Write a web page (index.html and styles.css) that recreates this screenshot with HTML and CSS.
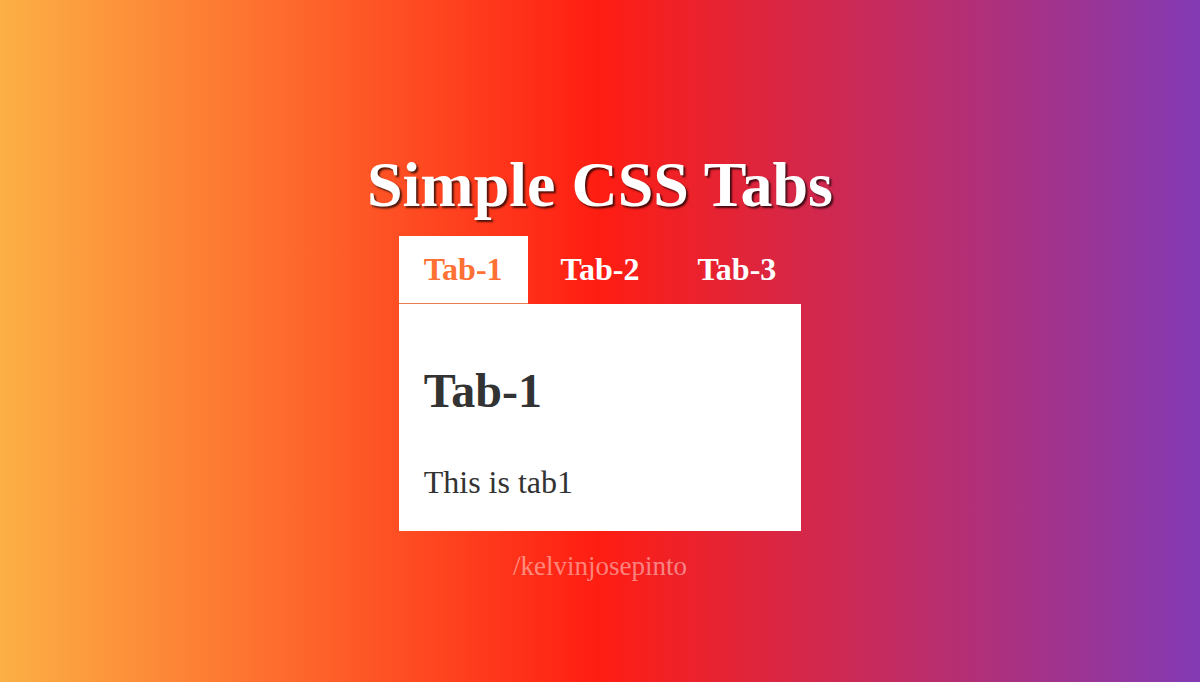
FILE: index.html
```html
<!DOCTYPE html>
<html lang="en">
<head>
  <meta charset="UTF-8">
  <meta name="viewport" content="width=device-width, initial-scale=1.0">
  <title>Simple CSS Tabs</title>
  <link rel="stylesheet" href="styles.css">
</head>
<body>

<h1>Simple CSS Tabs</h1>

<div class="tabs">
  <input type="radio" name="tabs" id="tab1" checked>
  <label for="tab1">Tab-1</label>
  <input type="radio" name="tabs" id="tab2">
  <label for="tab2">Tab-2</label>
  <input type="radio" name="tabs" id="tab3">
  <label for="tab3">Tab-3</label>

  <div class="tab content1">
    <h2>Tab-1</h2>
    <p>This is tab1</p>
  </div>
  <div class="tab content2">
    <h2>Tab-2</h2>
    <p>This is tab2</p>
  </div>
  <div class="tab content3">
    <h2>Tab-3</h2>
    <p>This is tab3</p>
  </div>
</div>

<a class="credit" href="#">/kelvinjosepinto</a>

</body>
</html>
```
FILE: styles.css
```css
body {
  box-sizing: border-box;
  margin: 0;
  padding-top: 48px;
  min-height: 100vh;
  display: flex;
  flex-direction: column;
  align-items: center;
  justify-content: center;
  font-family: "Liberation Serif", "Times New Roman", serif;
  font-size: 32px;
  color: #333;
  background: linear-gradient(to right, #fcb045, #ff1d12, #833ab4);
}

h1 {
  margin: 0 0 14px;
  font-size: 64px;
  color: #fff;
  text-shadow: 2px 2px 2px rgba(0, 0, 0, 0.7);
}

.tabs {
  display: grid;
  grid-template-columns: auto auto auto;
  column-gap: 8px;
}

.tabs input {
  position: absolute;
  opacity: 0;
}

.tabs label {
  padding: 15px 25px;
  border-bottom: 1px solid transparent;
  font-weight: bold;
  color: #fff;
  cursor: pointer;
}

.tabs input:checked + label {
  background: #fff;
  border-bottom-color: #e87b50;
  color: #ff7034;
}

.tab {
  display: none;
  grid-column: 1 / -1;
  padding: 25px 25px 30px;
  background: #fff;
}

.tab h2 {
  margin: 34px 0 46px;
  font-size: 48px;
}

.tab p {
  margin: 0;
}

#tab1:checked ~ .content1,
#tab2:checked ~ .content2,
#tab3:checked ~ .content3 {
  display: block;
}

.credit {
  margin-top: 20px;
  font-size: 27px;
  color: rgba(255, 255, 255, 0.45);
  text-decoration: none;
}
```
